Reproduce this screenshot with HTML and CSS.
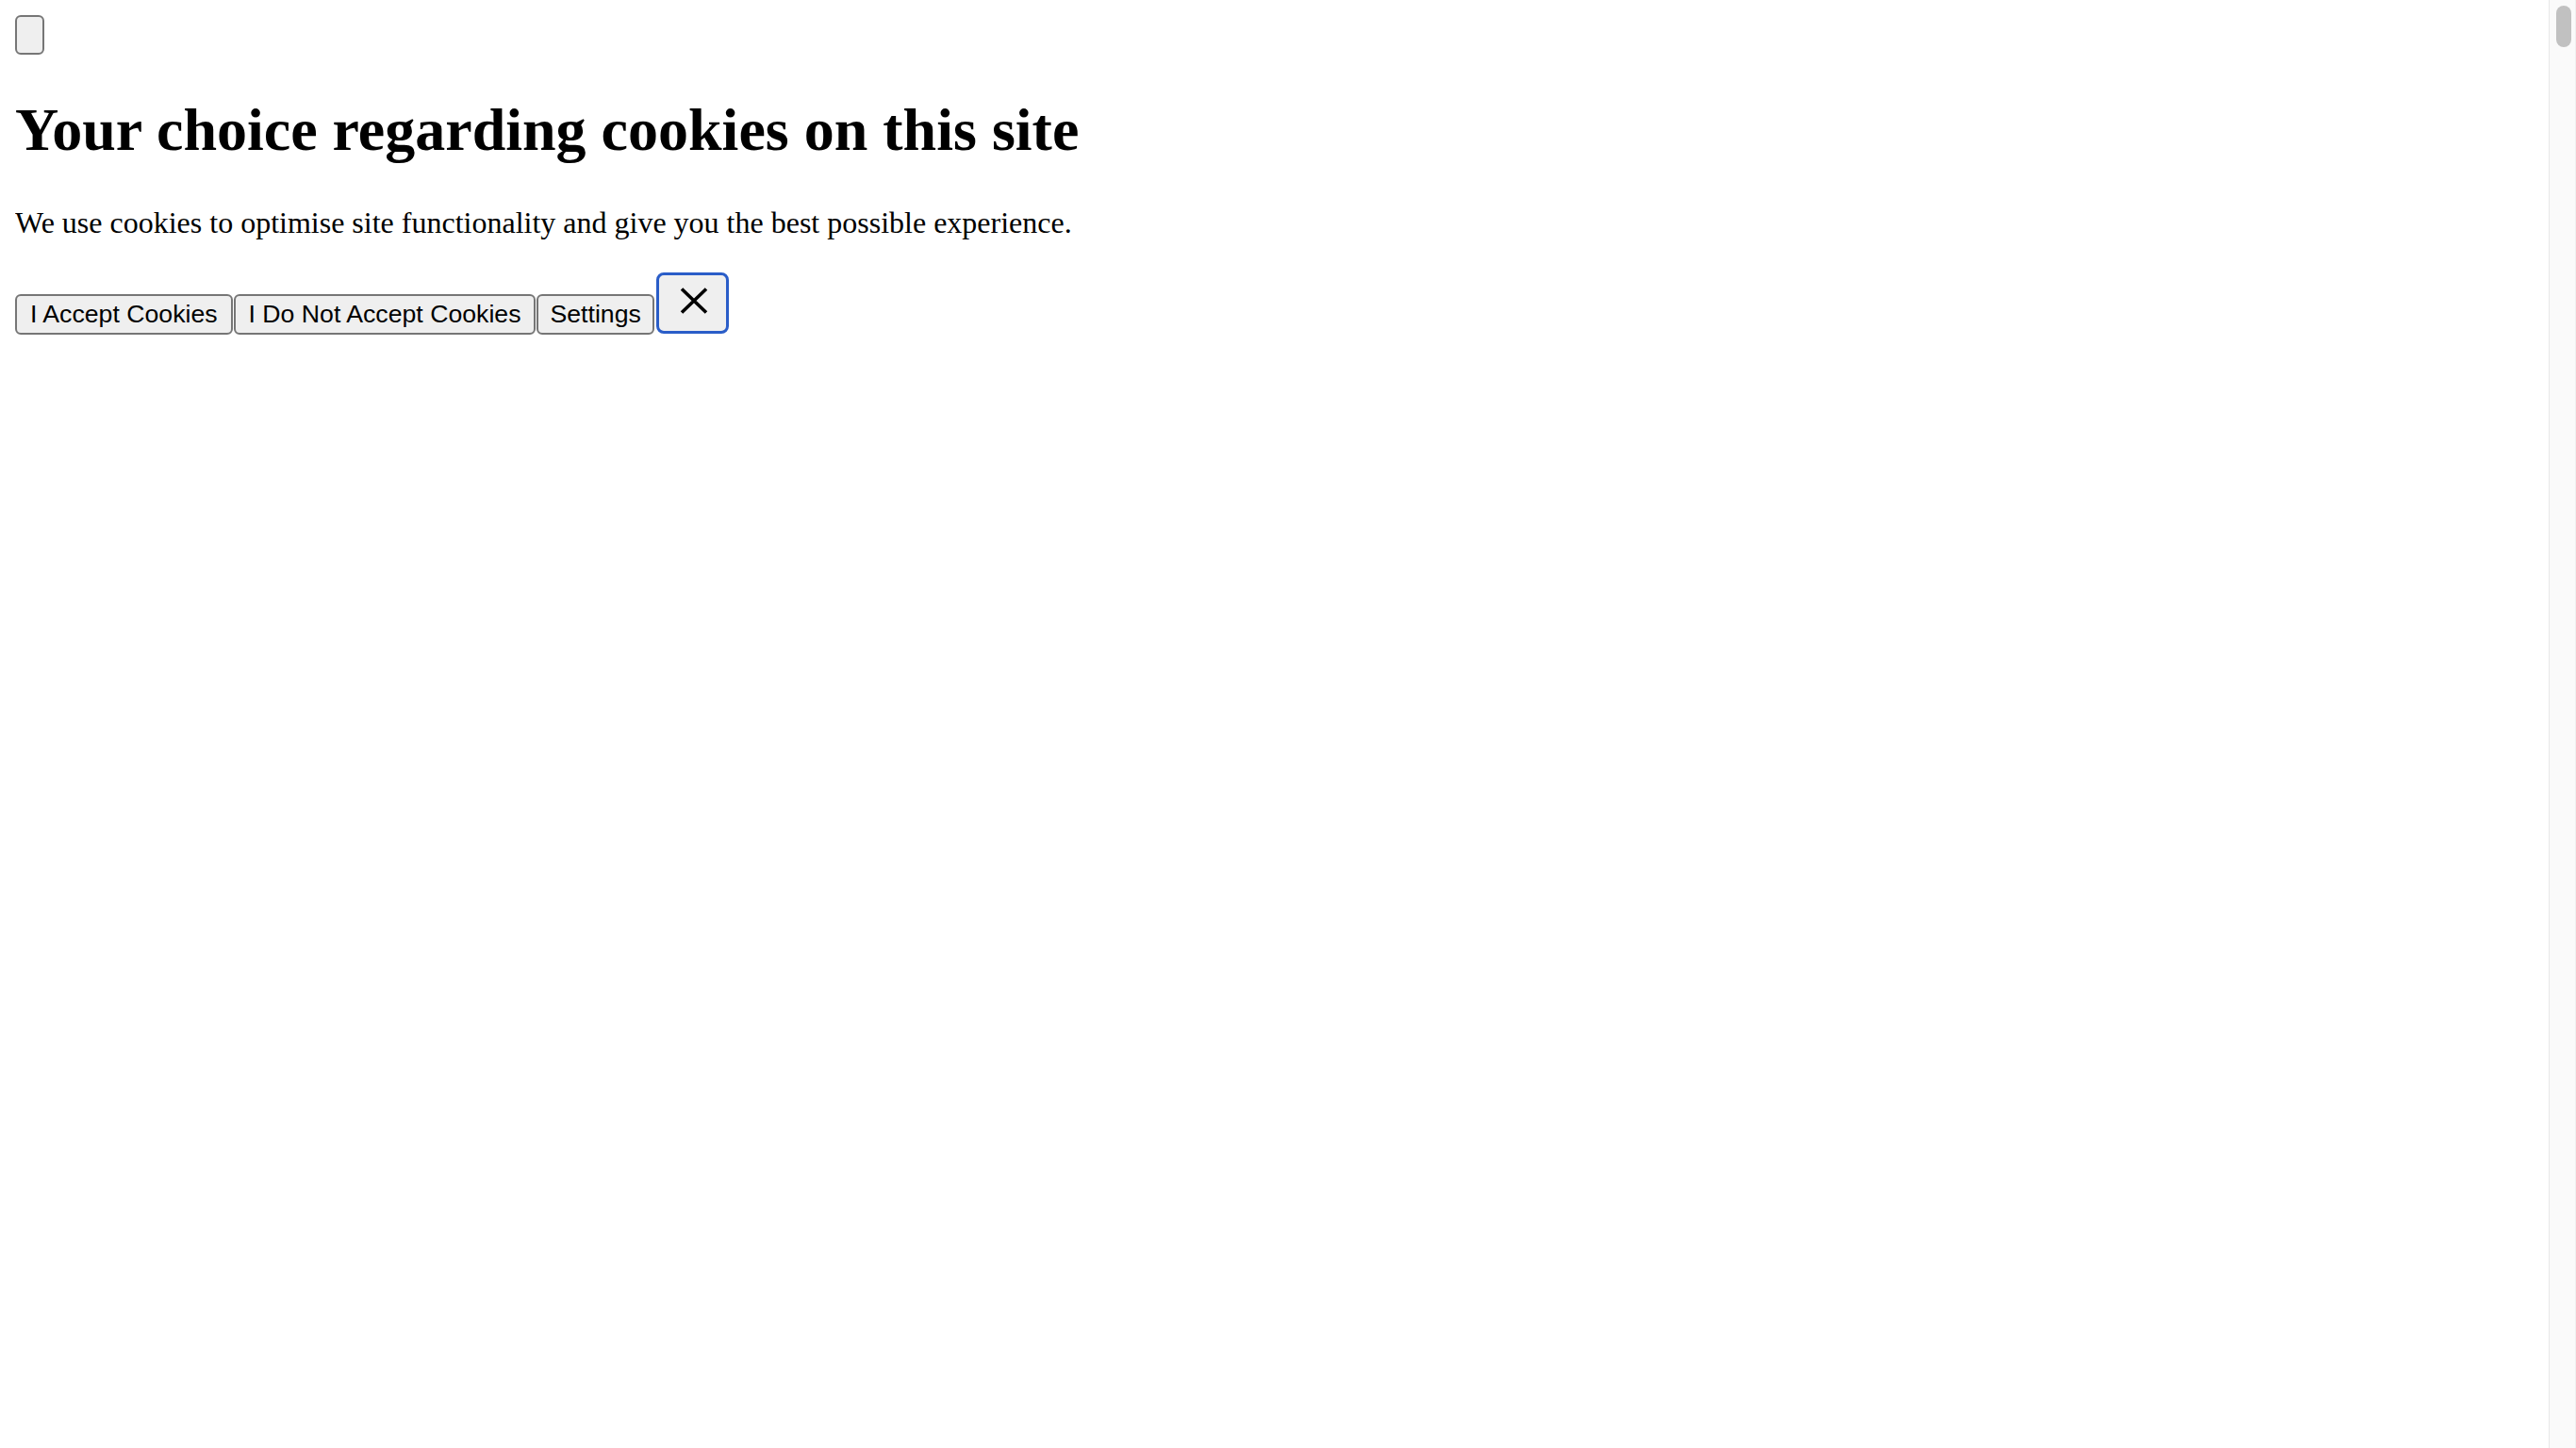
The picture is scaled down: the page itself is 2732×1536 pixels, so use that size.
FILE: index.html
```html
<!DOCTYPE html>
<html lang="en">
<head>
<meta charset="utf-8">
<title>Cookie consent</title>
<link rel="stylesheet" href="styles.css">
</head>
<body>
<div class="page">
  <button class="btn btn-empty" type="button" aria-label="Open"></button>
  <h1 class="title">Your choice regarding cookies on this site</h1>
  <p class="lead">We use cookies to optimise site functionality and give you the best possible experience.</p>
  <div class="actions">
    <button class="btn" type="button">I Accept Cookies</button>
    <button class="btn" type="button">I Do Not Accept Cookies</button>
    <button class="btn btn-narrow" type="button">Settings</button>
    <button class="btn btn-close" type="button" aria-label="Close">
      <svg class="close-icon" viewBox="0 0 30 28" width="30" height="28" aria-hidden="true">
        <path d="M2 1.5 L28 26.5 M28 1.5 L2 26.5" stroke="#000" stroke-width="3.6" fill="none"/>
      </svg>
    </button>
  </div>
</div>
<div class="scrollbar" aria-hidden="true"><div class="scrollbar-thumb"></div></div>
</body>
</html>
```

FILE: styles.css
```css
html, body {
  background: #ffffff;
}

body {
  margin: 16px;
  font-family: "Liberation Serif", "Times New Roman", serif;
  color: #000000;
}

.page {
  display: block;
}

.title {
  font-size: 64px;
  font-weight: 700;
  margin: 42.88px 0;
}

.lead {
  font-size: 32px;
  margin: 32px 0;
}

.btn {
  box-sizing: border-box;
  font-family: "Liberation Sans", Arial, sans-serif;
  font-size: 26.67px;
  line-height: normal;
  color: #000000;
  background: #efefef;
  border: 2px solid #767676;
  border-radius: 6px;
  padding: 4px 14px;
  margin: 0 1px 0 0;
  cursor: default;
}

.btn-narrow {
  padding: 4px 12px;
}

.btn-empty {
  display: block;
  width: 31px;
  height: 42px;
  padding: 0;
}

.actions {
  display: flex;
  align-items: flex-end;
}

.btn-close {
  width: 77px;
  height: 65px;
  margin: 2px 0 1px 1px;
  padding: 0 0 4px 4px;
  border: 3.5px solid #2a5dc8;
  border-radius: 8px;
  display: flex;
  align-items: center;
  justify-content: center;
}

.close-icon {
  display: block;
  width: 30px;
  height: 28px;
}

.scrollbar {
  position: fixed;
  top: 0;
  right: 0;
  bottom: 0;
  width: 29px;
  background: #fafafa;
  border-left: 1px solid #e8e8e8;
  border-right: 1px solid #efefef;
  box-sizing: border-box;
}

.scrollbar-thumb {
  position: absolute;
  top: 6px;
  left: 7px;
  width: 16px;
  height: 44px;
  border-radius: 8px;
  background: #c1c1c1;
}
```
